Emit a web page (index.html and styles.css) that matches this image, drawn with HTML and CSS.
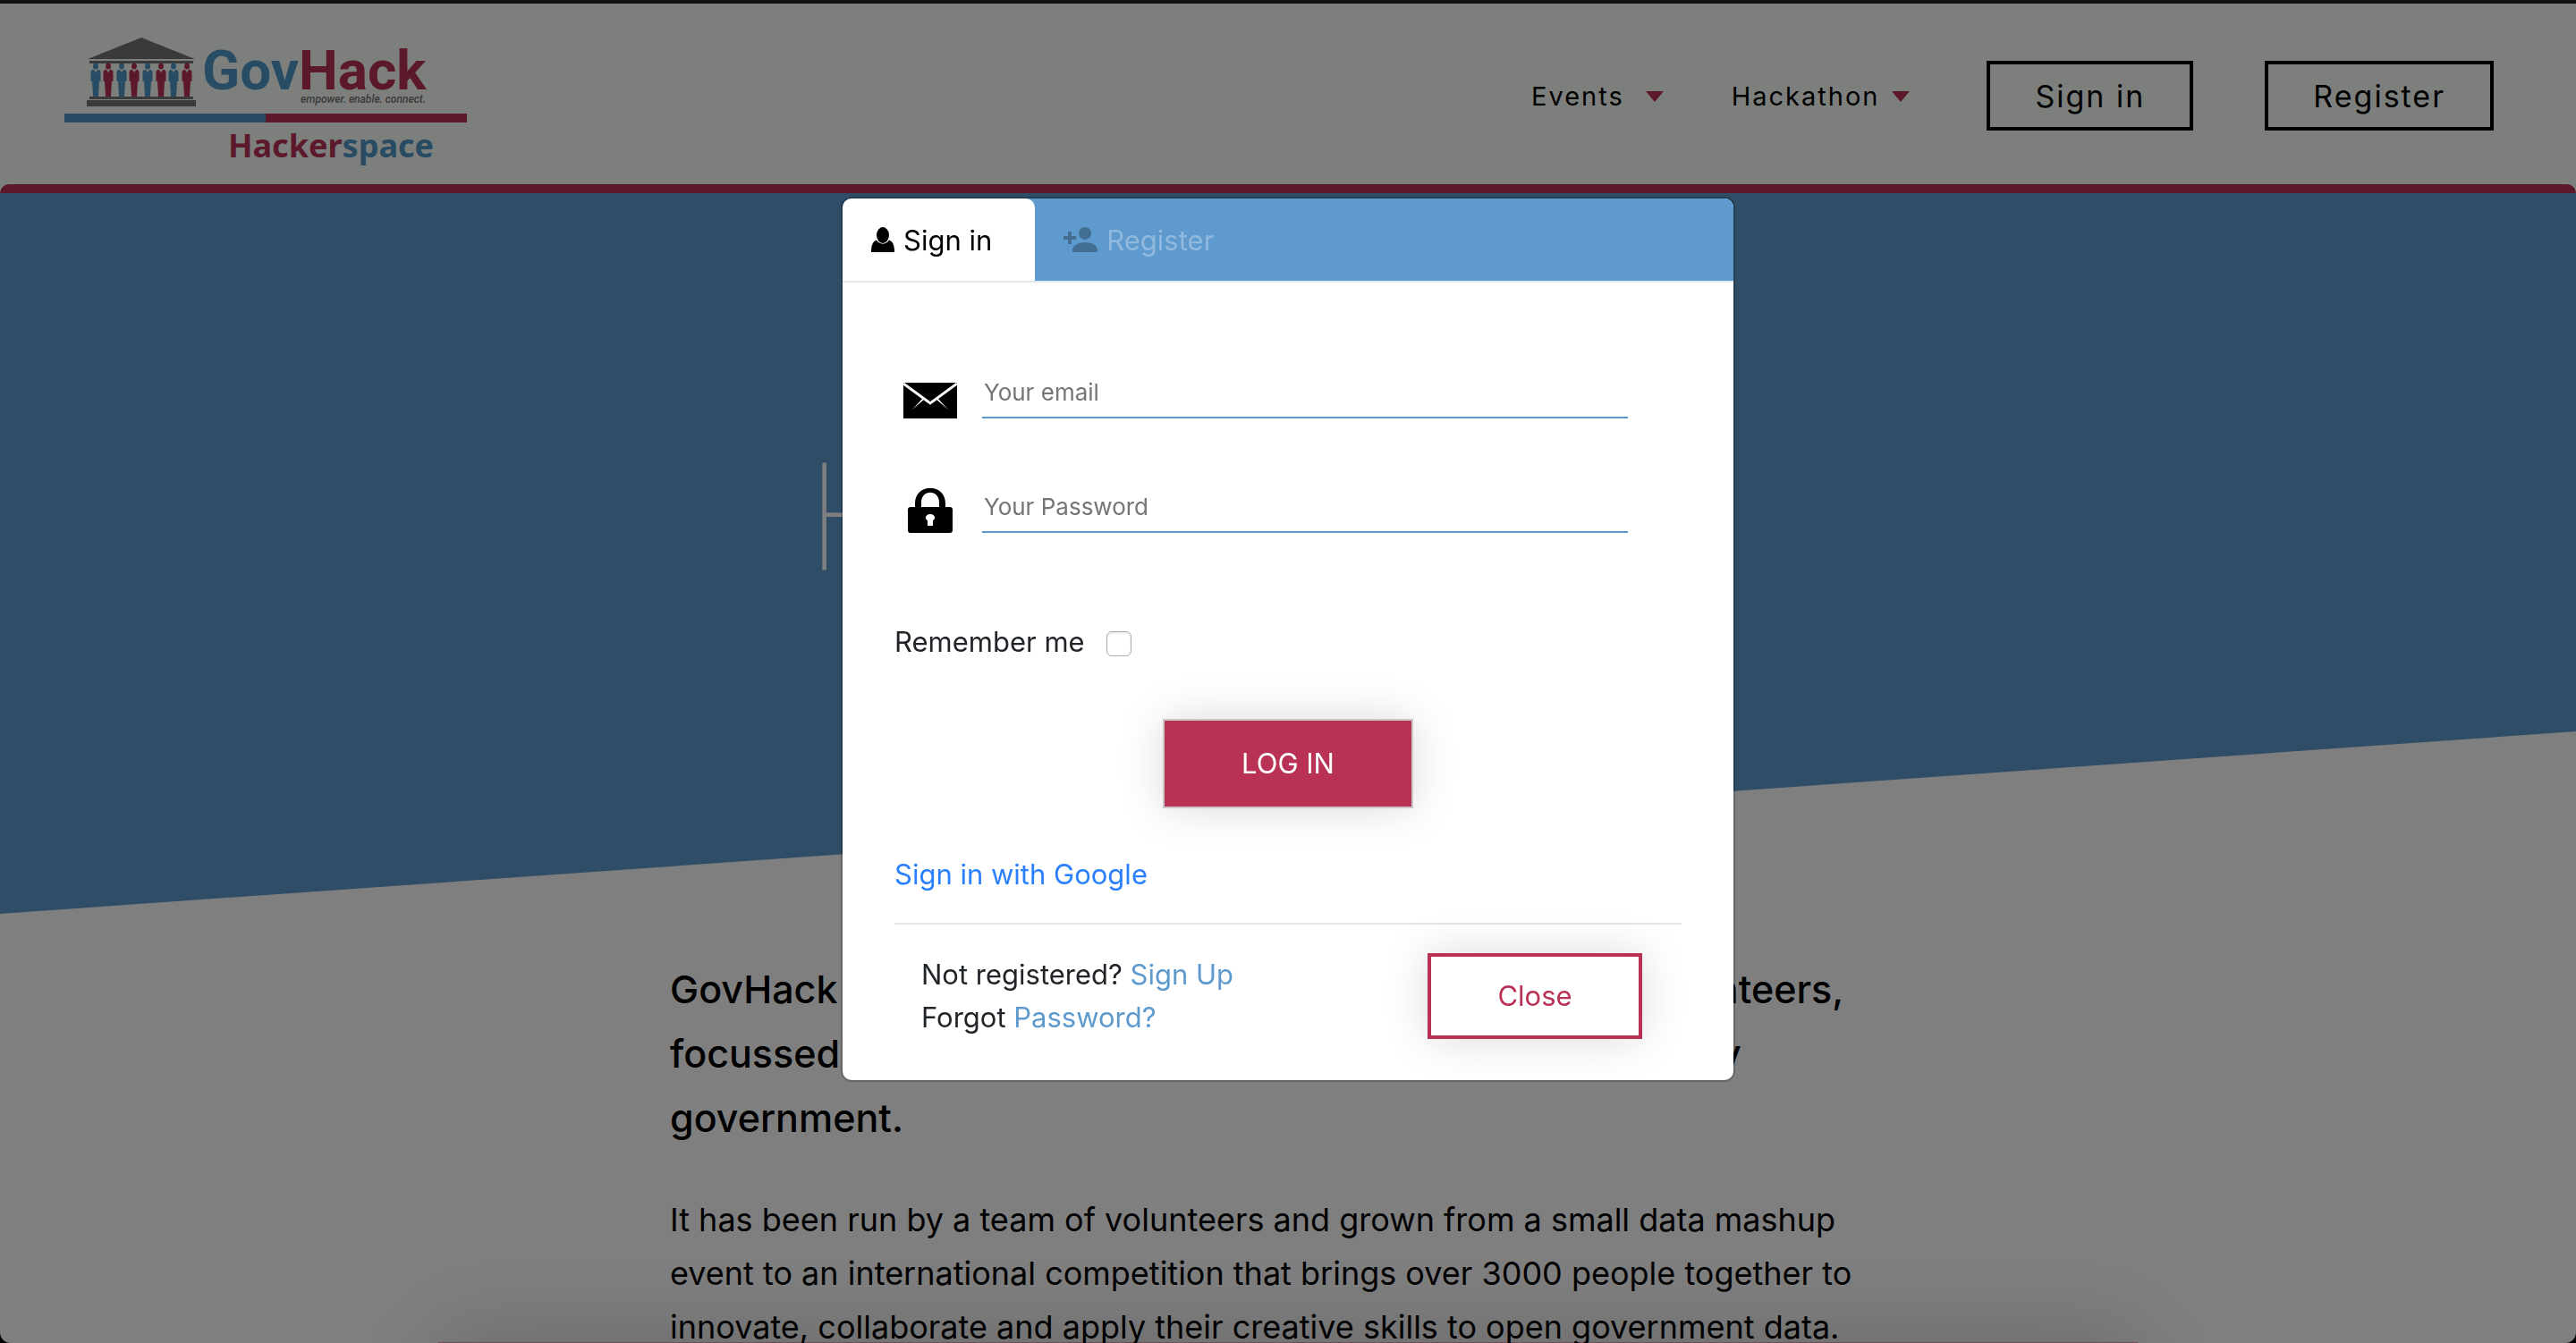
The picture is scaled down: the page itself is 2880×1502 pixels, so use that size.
FILE: index.html
```html
<!DOCTYPE html>
<html lang="en">
<head>
<meta charset="utf-8">
<title>GovHack Hackerspace</title>
<link rel="stylesheet" href="styles.css">
</head>
<body>
<header class="header">
  <a class="brand" href="#">
    <svg width="450" height="144" viewBox="0 0 450 144" role="img" aria-label="GovHack Hackerspace">
      <defs>
        <g id="person">
          <ellipse cx="6" cy="3" rx="3" ry="3.5"/>
          <path d="M2 7h2l2 3 2-3h2l1.500 2v11h-1.500l-1 17H3L2 20H.5V9z"/>
        </g>
      </defs>
      <g class="logo-stone">
        <path d="M26 24 86 0l60 24zM28 26h116v3H28zM28 66h116v3H28zM25 70h122v7H25z"/>
      </g>
      <g class="logo-blue">
        <use href="#person" x="29" y="29"/><use href="#person" x="58" y="29"/><use href="#person" x="87" y="29"/><use href="#person" x="116" y="29"/>
        <path d="M0 85h225v10H0z"/>
        <text class="logo-name" x="154" y="58">Gov</text>
      </g>
      <g class="logo-red">
        <use href="#person" x="43" y="29"/><use href="#person" x="72" y="29"/><use href="#person" x="102" y="29"/><use href="#person" x="131" y="29"/>
        <path d="M225 85h225v10H225z"/>
        <text class="logo-name" x="262" y="58">Hack</text>
      </g>
      <text class="logo-tag" x="264" y="73">empower<tspan class="logo-blue">.</tspan> enable<tspan class="logo-red">.</tspan> connect.</text>
      <text class="logo-sub logo-red" x="183" y="134">Hacker<tspan class="logo-blue">space</tspan></text>
    </svg>
  </a>
  <nav class="nav">
    <a class="nav-link nav-link-wide" href="#">Events<span class="caret"></span></a>
    <a class="nav-link" href="#">Hackathon<span class="caret"></span></a>
    <button class="nav-button" type="button">Sign in</button>
    <button class="nav-button" type="button">Register</button>
  </nav>
</header>
<main>
  <section class="hero"><h1 class="hero-title">Hackerspace</h1></section>
  <section class="about">
    <p class="lead">GovHack is a not-for-profit event run by a society of volunteers,<br>focussed on open government data that was shared freely<br>government.</p>
    <p class="body-text">It has been run by a team of volunteers and grown from a small data mashup event to an international competition that brings over 3000 people together to innovate, collaborate and apply their creative skills to open government data.</p>
  </section>
  <section class="card"></section>
</main>
<div class="backdrop">
  <div class="modal" role="dialog" aria-label="Sign in">
    <div class="tabs">
      <button class="tab tab-active" type="button">
        <svg width="26" height="28" viewBox="0 0 26 28" aria-hidden="true"><ellipse cx="13" cy="9" rx="7" ry="9"/><path d="M6 14.500c3 5.500 11 5.500 14 0 4 1.500 6 5 6 13.500H0c0-8.500 2-12 6-13.500z"/></svg>
        Sign in
      </button>
      <button class="tab" type="button">
        <svg width="38" height="28" viewBox="0 0 38 28" aria-hidden="true"><circle cx="24" cy="7" r="7"/><path d="M10 28v-2c0-12 28-12 28 0v2zM5 5h4v5h5v4H9v5H5v-5H0v-4h5z"/></svg>
        Register
      </button>
    </div>
    <form class="form">
      <div class="field">
        <label class="field-icon" for="email"><svg width="60" height="40" viewBox="0 0 60 40" role="img" aria-label="Email"><path d="M0 0h60v40H0z"/><path class="fold" d="m0 1 30 22L60 1"/><path class="crease" d="M22 17 10 30l14-12zM38 17l12 13-14-12z"/></svg></label>
        <input class="input" id="email" type="email" placeholder="Your email">
      </div>
      <div class="field">
        <label class="field-icon" for="password"><svg width="50" height="50" viewBox="0 0 50 50" role="img" aria-label="Password"><path fill-rule="evenodd" d="M8 21V17C8-6 42-6 42 17v4h5q3 0 3 3v23q0 3-3 3H3q-3 0-3-3V24q0-3 3-3zM15 21h20v-5c0-15-20-15-20 0zM22 36v6h6v-6c4-2 2-7-3-7s-7 5-3 7z"/></svg></label>
        <input class="input" id="password" type="password" placeholder="Your Password">
      </div>
      <div class="remember"><label for="remember">Remember me</label><input class="checkbox" id="remember" type="checkbox"></div>
      <button class="login" type="button">LOG IN</button>
      <a class="google" href="#">Sign in with Google</a>
      <div class="footer">
        <p class="help">Not registered? <a href="#">Sign Up</a><br>Forgot <a href="#">Password?</a></p>
        <button class="close" type="button">Close</button>
      </div>
    </form>
  </div>
</div>
</body>
</html>
```
FILE: styles.css
```css
* { box-sizing: border-box; }
html, body { height: 100%; }
html { background: #000; }
body {
  margin: 0;
  overflow: hidden;
  border-radius: 0 0 12px 12px;
  background: #fff;
  color: #000;
  font-family: Inter, "Liberation Sans", sans-serif;
}
a { color: inherit; text-decoration: none; }
button, input { font: inherit; }

.header {
  display: flex;
  align-items: flex-start;
  justify-content: space-between;
  height: 206px;
  padding: 38px 92px 0 72px;
  border-top: 4px solid #222;
  background: #fafefa;
}
.brand svg { display: block; }
.logo-stone { fill: #747474; }
.logo-blue { fill: #5098c6; }
.logo-red { fill: #b83256; }
.logo-name { font: bold 62px Roboto, sans-serif; }
.logo-tag { fill: #747474; font: italic 500 12px Roboto, sans-serif; }
.logo-sub { font: bold 36px "Noto Sans", sans-serif; }

.nav { display: flex; align-items: center; padding-top: 26px; }
.nav-link {
  display: flex;
  align-items: center;
  gap: 14px;
  margin-right: 76px;
  font-size: 29px;
  letter-spacing: 2px;
}
.nav-link-wide { gap: 24px; }
.nav-link + .nav-button { margin-left: 10px; }
.caret {
  margin-top: 2px;
  border: 10px solid transparent;
  border-top: 12px solid #b83256;
  border-bottom: 0;
}
.nav-button {
  height: 78px;
  padding: 0 50px;
  border: 4px solid #000;
  background: none;
  color: #000;
  font-size: 34px;
  letter-spacing: 2px;
}
.nav-button + .nav-button { margin-left: 80px; }

.hero {
  height: 816px;
  padding: 265px 903px 0;
  border-top: 10px solid #b83256;
  border-radius: 10px 10px 0 0;
  background: #5e9ace;
  clip-path: polygon(0 0, 100% 0, 100% 612px, 0 100%);
}
.hero-title { margin: 0; color: #fff; font: 100 168px/200px Roboto, sans-serif; }
.about { width: 1382px; margin: 0 auto; padding-top: 48px; }
.lead { margin: 0; font-size: 43px; font-weight: 500; line-height: 72px; }
.body-text { margin: 48px 0 0; font-size: 36px; line-height: 60px; }
.card {
  width: 66%;
  height: 400px;
  margin: -13px auto 0;
  border-top: 2px solid #d9a0b0;
  box-shadow: 0 0 100px rgba(0, 0, 0, .2);
}

.backdrop {
  position: fixed;
  inset: 0;
  display: flex;
  align-items: flex-start;
  justify-content: center;
  padding-top: 222px;
  background: rgba(0, 0, 0, .5);
}
.modal {
  width: 996px;
  overflow: hidden;
  border-radius: 10px;
  background: #fff;
  box-shadow: 0 0 0 2px rgba(0, 0, 0, .2);
}
.tabs { display: flex; height: 94px; border-bottom: 2px solid #e5eaf0; background: #5e9ace; }
.tab {
  display: flex;
  align-items: center;
  gap: 10px;
  padding: 0 32px;
  border: 0;
  border-radius: 10px 10px 0 0;
  background: none;
  color: #91b8dd;
  font-size: 31px;
}
.tab svg { fill: #426e94; }
.tab-active { padding-right: 48px; background: #fff; color: #000; }
.tab-active svg { fill: #000; }

.form { display: flex; flex-direction: column; padding: 94px 58px 0; color: #212529; font-size: 31px; line-height: 48px; }
.field { display: flex; align-items: flex-end; gap: 28px; height: 58px; padding-left: 10px; margin-bottom: 70px; }
.field-icon { display: flex; justify-content: center; width: 60px; }
.fold { fill: none; stroke: #fff; stroke-width: 3; }
.crease { fill: #fff; }
.input {
  width: 722px;
  height: 58px;
  padding: 0 2px;
  border: 0;
  border-bottom: 2px solid #5e9ace;
  background: none;
  font-size: 26px;
}
.input::placeholder { color: #757575; opacity: 1; }
.remember { display: flex; align-items: center; gap: 24px; margin-top: 28px; }
.checkbox {
  appearance: none;
  width: 28px;
  height: 28px;
  margin: 4px 0 0;
  border: 1px solid #aaa;
  border-radius: 6px;
  background: #fff;
  box-shadow: inset 0 2px 2px #eee;
}
.login, .close { box-shadow: 0 0 50px rgba(0, 0, 0, .15); }
.login {
  align-self: center;
  width: 280px;
  height: 100px;
  margin-top: 62px;
  border: 2px solid #c8c8c8;
  background: #b93256;
  color: #fff;
}
.google { align-self: flex-start; margin-top: 50px; color: #2a7fff; }
.footer {
  display: flex;
  align-items: flex-start;
  justify-content: space-between;
  margin-top: 30px;
  padding: 32px 44px 46px 30px;
  border-top: 2px solid #e5e5e5;
}
.help { margin: 0; }
.help a { color: #5e9ace; }
.close { width: 240px; height: 96px; border: 4px solid #b93256; background: #fff; color: #b93256; }
```
